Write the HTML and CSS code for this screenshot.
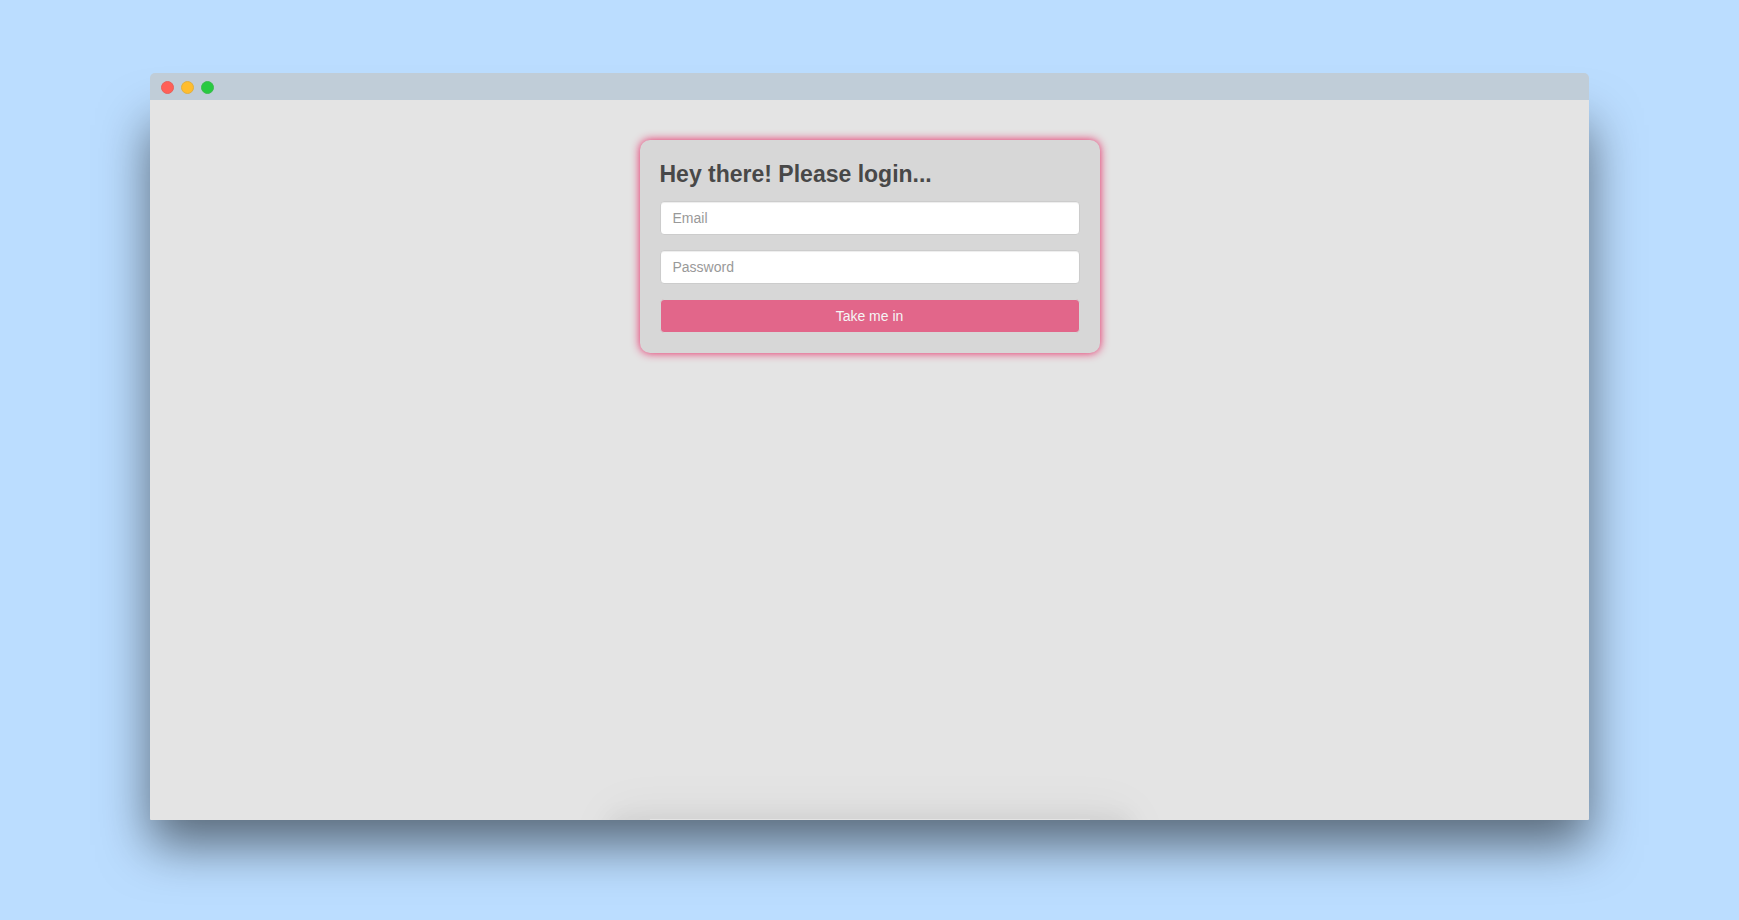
FILE: index.html
```html
<!DOCTYPE html>
<html lang="en">
<head>
<meta charset="utf-8">
<title>Login</title>
<link rel="stylesheet" href="styles.css">
</head>
<body>
<div class="window">
  <header class="titlebar">
    <span class="dot dot-close"></span>
    <span class="dot dot-minimize"></span>
    <span class="dot dot-zoom"></span>
  </header>
  <main class="page">
    <form class="login">
      <h1 class="login-title">Hey there! Please login...</h1>
      <input class="field" type="email" placeholder="Email" aria-label="Email">
      <input class="field" type="password" placeholder="Password" aria-label="Password">
      <button class="submit" type="button">Take me in</button>
    </form>
    <div class="bottom-shade"></div>
  </main>
</div>
</body>
</html>
```
FILE: styles.css
```css
* { box-sizing: border-box; }

body {
  margin: 0;
  min-height: 100vh;
  padding: 73px 150px 100px;
  display: flex;
  background: #bbddff;
  font-family: "Liberation Sans", Arial, sans-serif;
  font-size: 14px;
  line-height: 20px;
}

.window {
  flex: 1;
  display: flex;
  flex-direction: column;
}

.titlebar {
  position: relative;
  z-index: 1;
  display: flex;
  align-items: center;
  gap: 7px;
  height: 27px;
  padding: 1px 0 0 11px;
  border-radius: 5px 5px 0 0;
  background: #c0cdd8;
}

.dot {
  width: 13px;
  height: 13px;
  border: 1px solid;
  border-radius: 50%;
}

.dot-close { background: #ff5f57; border-color: #e5605b; }
.dot-minimize { background: #ffbd2e; border-color: #e0b040; }
.dot-zoom { background: #28ca41; border-color: #3dbb4f; }

.page {
  flex: 1;
  display: flex;
  flex-direction: column;
  align-items: center;
  justify-content: space-between;
  overflow: hidden;
  padding-top: 40px;
  border-radius: 0 0 1px 1px;
  background: #e4e4e4;
  box-shadow: 0 25px 50px rgba(0, 0, 0, 0.53);
}

.login {
  display: flex;
  flex-direction: column;
  gap: 15px;
  width: 460px;
  max-width: 100%;
  padding: 20px;
  border-radius: 10px;
  background: #d7d7d7;
  box-shadow: 0 0 10px #e6205f;
}

.login-title {
  margin: 0 0 -2px;
  font-size: 23px;
  line-height: 28px;
  font-weight: 700;
  color: #484848;
}

.field {
  width: 100%;
  height: 34px;
  padding: 6px 12px;
  border: 1px solid #cccccc;
  border-radius: 4px;
  background: #ffffff;
  box-shadow: inset 0 1px 1px rgba(0, 0, 0, 0.075);
  font: inherit;
  color: #555555;
}

.field::placeholder { color: #999999; opacity: 1; }

.submit {
  height: 34px;
  border: 1px solid #d7d7d7;
  border-radius: 4px;
  background: #e2668a;
  font: inherit;
  color: #f5f5f5;
}

.bottom-shade {
  width: 440px;
  max-width: 100%;
  height: 1px;
  box-shadow:
    0 36px 20px 40px rgba(0, 0, 0, 0.05),
    0 32px 50px 40px rgba(0, 0, 0, 0.05);
}
```
